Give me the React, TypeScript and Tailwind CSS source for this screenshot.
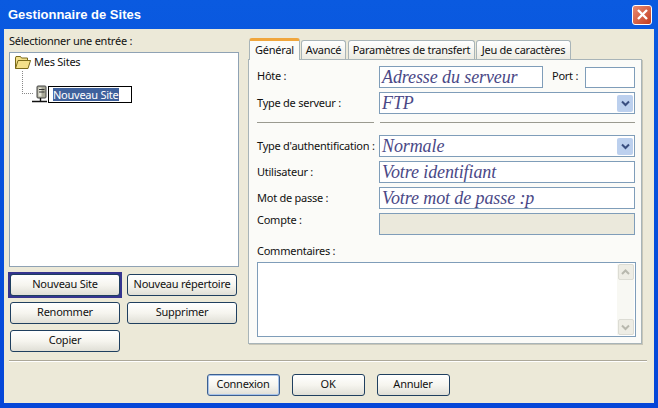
const ui = "font-['Noto_Sans',sans-serif] text-[11px] tracking-[-0.25px] text-[#111]";

function Btn({ label, w, focus, def }: { label: string; w: string; focus?: boolean; def?: boolean }) {
  const inner = (
    <div className={`${w} h-[22px] pb-[2px] shrink-0 flex items-center justify-center rounded-[3px] border ${def ? "border-[#3c5f90] shadow-[inset_0_0_0_1px_#a8c4ea]" : "border-[#1f3f5f]"} bg-gradient-to-b from-white via-[#f6f5ef] to-[#e0dfd6] text-[11px] text-[#111]`}>
      {label}
    </div>
  );
  return focus ? <div className="-m-[2px] p-[2px] bg-[#35358f] shrink-0">{inner}</div> : inner;
}

function Chevron() {
  return (
    <div className="w-[16px] h-[17px] bg-[#bcd0ee] rounded-[2px] flex items-center justify-center mr-[1px] shrink-0">
      <svg width="9" height="7" viewBox="0 0 9 7" fill="none">
        <path d="M1 1.5 L4.5 5 L8 1.5" stroke="#3a4f80" strokeWidth="2" />
      </svg>
    </div>
  );
}

const script = "font-['Liberation_Serif',serif] italic text-[18px] text-[#4a4886] tracking-[-0.1px] leading-none pl-[2px] whitespace-nowrap";

function Field({ value, select, disabled, w }: { value?: string; select?: boolean; disabled?: boolean; w?: string }) {
  return (
    <div className={`${w ?? "w-[256px]"} h-[22px] shrink-0 border border-[#7f9db9] ${disabled ? "bg-[#ebe9dc]" : "bg-white"} flex items-center justify-between overflow-hidden`}>
      <span className={script}>{value}</span>
      {select && <Chevron />}
    </div>
  );
}

function Row({ label, children, mt, raise }: { label: string; children: React.ReactNode; mt: string; raise?: string }) {
  return (
    <div className={`flex items-center ${mt}`}>
      <div className={`w-[122px] shrink-0 whitespace-nowrap ${raise ?? ""}`}>{label}</div>
      {children}
    </div>
  );
}

function ScrollBtn({ up }: { up?: boolean }) {
  return (
    <div className="w-[16px] h-[16px] bg-[#eeede5] border border-[#dcdcd4] rounded-[2px] flex items-center justify-center">
      <svg width="9" height="7" viewBox="0 0 9 7" fill="none">
        <path d={up ? "M1 5 L4.5 1.5 L8 5" : "M1 1.5 L4.5 5 L8 1.5"} stroke="#b8b8ae" strokeWidth="2" />
      </svg>
    </div>
  );
}

function Tab({ label, w, active }: { label: string; w: string; active?: boolean }) {
  return active ? (
    <div className={`${w} h-[22px] -mb-px z-10 bg-[#fbfbf8] border-x border-[#a8b4b8] border-t-[3px] border-t-[#f0a63c] border-b-0 rounded-t-[3px] flex items-center justify-center`}>
      {label}
    </div>
  ) : (
    <div className={`${w} h-[19px] bg-gradient-to-b from-white to-[#ecebe2] border border-b-0 border-[#a8b4b8] rounded-t-[3px] flex items-center justify-center`}>
      {label}
    </div>
  );
}

export default function App() {
  return (
    <div className={`${ui} w-[658px] h-[408px] overflow-hidden bg-gradient-to-b from-[#0a5ae0] to-[#0546d8] px-[4px] pb-[5px] flex flex-col`}>
      <div className="h-[29px] shrink-0 flex items-center justify-between pl-[4px] pr-[2px]">
        <span className="font-['Liberation_Sans',sans-serif] font-bold text-[13px] tracking-normal text-white">Gestionnaire de Sites</span>
        <div className="w-[20px] h-[20px] rounded-[3px] border border-white bg-gradient-to-br from-[#e88a70] to-[#c23a1c] flex items-center justify-center">
          <svg width="13" height="13" viewBox="0 0 13 13" fill="none">
            <path d="M2 2 L11 11 M11 2 L2 11" stroke="white" strokeWidth="2.4" />
          </svg>
        </div>
      </div>

      <div className="flex-1 bg-[#ece9d8] flex flex-col px-[5px]">
        <div className="flex flex-1">
          <div className="w-[230px] shrink-0 flex flex-col">
            <div className="mt-[2px] h-[21px] leading-[19px]">Sélectionner une entrée :</div>
            <div className="h-[215px] border border-[#8fa2b4] bg-white pl-[5px] pt-[1px]">
              <div className="flex items-center h-[17px] gap-[3px]">
                <svg width="16" height="13" viewBox="0 0 16 13">
                  <path d="M0.5 2 L1 0.5 L5.5 0.5 L6.5 2 L12.5 2 L12.5 4.5 L15.5 4.5 L13 12.5 L0.5 12.5 Z" fill="#f3e08a" stroke="#7a6a1a" strokeWidth="1" />
                  <path d="M0.5 12.5 L3 4.5 L15.5 4.5" fill="none" stroke="#7a6a1a" strokeWidth="1" />
                </svg>
                <span>Mes Sites</span>
              </div>
              <div className="flex items-start h-[26px]">
                <div className="ml-[7px] w-[11px] h-[23px] border-l border-b border-dotted border-[#888]" />
                <div className="flex items-center mt-[14px]">
                  <svg width="16" height="18" viewBox="0 0 16 18" className="-ml-[1px]">
                    <rect x="5" y="1" width="9" height="12" rx="1" fill="#a9a998" stroke="#444" />
                    <rect x="6.5" y="2.5" width="3" height="9" fill="#e4e4d8" />
                    <path d="M7 4.5 H12.5 M7 7 H12.5" stroke="#333" />
                    <path d="M8.5 13 V16 M0 16.5 H15" stroke="#111" strokeWidth="1.4" />
                  </svg>
                  <div className="w-[84px] h-[17px] border border-black bg-white flex items-center pl-[4px]">
                    <span className="bg-[#3f619c] text-white leading-[13px]">Nouveau Site</span>
                  </div>
                </div>
              </div>
            </div>
            <div className="mt-[7px] ml-[1px] flex gap-[7px]">
              <Btn label="Nouveau Site" w="w-[110px]" focus />
              <Btn label="Nouveau répertoire" w="w-[110px]" />
            </div>
            <div className="mt-[6px] ml-[1px] flex gap-[7px]">
              <Btn label="Renommer" w="w-[110px]" />
              <Btn label="Supprimer" w="w-[110px]" />
            </div>
            <div className="mt-[6px] ml-[1px]">
              <Btn label="Copier" w="w-[110px]" />
            </div>
          </div>

          <div className="ml-[9px] w-[394px] shrink-0 flex flex-col mt-[9px]">
            <div className="flex items-end gap-[1px] pl-[1px] h-[21px]">
              <Tab label="Général" w="w-[51px]" active />
              <Tab label="Avancé" w="w-[45px]" />
              <div className="w-0" />
              <Tab label="Paramètres de transfert" w="w-[127px]" />
              <Tab label="Jeu de caractères" w="w-[95px]" />
            </div>
            <div className="h-[285px] bg-[#fbfbf8] border border-[#a8b4b8] shadow-[1px_1px_0_#c8c6b8] pl-[8px] pr-[6px] pt-[6px]">
              <Row label="Hôte :" mt="" raise="-mt-[2px]">
                <Field value="Adresse du serveur" w="w-[164px]" />
                <span className="ml-[9px] w-[33px] -mt-[2px]">Port :</span>
                <div className="w-[50px] h-[21px] border border-[#7f9db9] bg-white" />
              </Row>
              <Row label="Type de serveur :" mt="mt-[4px]">
                <Field value="FTP" select />
              </Row>
              <div className="flex mt-[8px] gap-[6px]">
                <div className="w-[117px] border-t border-[#9a9a90]" />
                <div className="w-[255px] border-t border-[#9a9a90]" />
              </div>
              <Row label="Type d'authentification :" mt="mt-[12px]">
                <Field value="Normale" select />
              </Row>
              <Row label="Utilisateur :" mt="mt-[4px]">
                <Field value="Votre identifiant" />
              </Row>
              <Row label="Mot de passe :" mt="mt-[4px]">
                <Field value="Votre mot de passe :p" />
              </Row>
              <Row label="Compte :" mt="mt-[4px]" raise="-mt-[7px]">
                <Field disabled />
              </Row>
              <div className="mt-[8px] h-[19px] leading-[16px]">Commentaires :</div>
              <div className="h-[75px] w-[379px] border border-[#7f9db9] bg-white flex justify-end py-[1px] pr-[1px]">
                <div className="w-[17px] bg-[#f8f8f3] flex flex-col justify-between items-center">
                  <ScrollBtn up />
                  <ScrollBtn />
                </div>
              </div>
            </div>
          </div>
        </div>

        <div className="border-t border-t-[#aca899] border-b border-b-white h-[2px] mb-[12px] mr-[2px]" />
        <div className="flex justify-center gap-[12px] h-[29px] mr-[2px]">
          <Btn label="Connexion" w="w-[73px]" def />
          <Btn label="OK" w="w-[73px]" />
          <Btn label="Annuler" w="w-[73px]" />
        </div>
      </div>
    </div>
  );
}
